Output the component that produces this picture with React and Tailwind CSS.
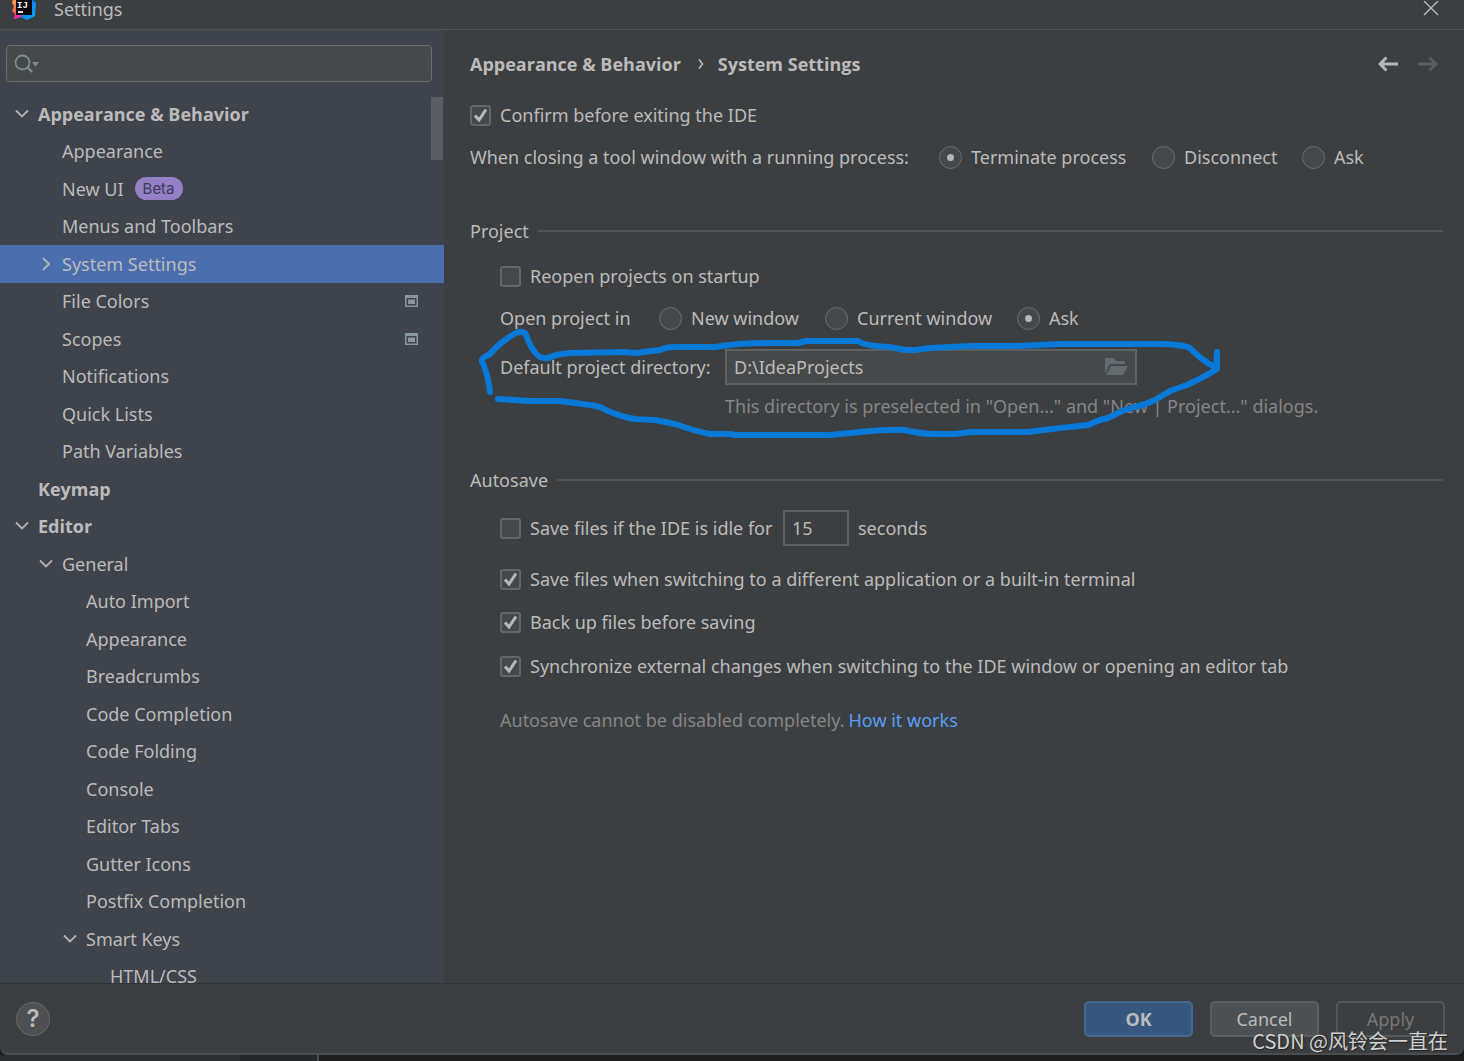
import React from "react";

const tree = [
  { label: "Appearance & Behavior", depth: 0, bold: true, arrow: "down" },
  { label: "Appearance", depth: 1 },
  { label: "New UI", depth: 1, badge: "Beta" },
  { label: "Menus and Toolbars", depth: 1 },
  { label: "System Settings", depth: 1, arrow: "right", selected: true },
  { label: "File Colors", depth: 1, project: true },
  { label: "Scopes", depth: 1, project: true },
  { label: "Notifications", depth: 1 },
  { label: "Quick Lists", depth: 1 },
  { label: "Path Variables", depth: 1 },
  { label: "Keymap", depth: 0, bold: true },
  { label: "Editor", depth: 0, bold: true, arrow: "down" },
  { label: "General", depth: 1, arrow: "down" },
  { label: "Auto Import", depth: 2 },
  { label: "Appearance", depth: 2 },
  { label: "Breadcrumbs", depth: 2 },
  { label: "Code Completion", depth: 2 },
  { label: "Code Folding", depth: 2 },
  { label: "Console", depth: 2 },
  { label: "Editor Tabs", depth: 2 },
  { label: "Gutter Icons", depth: 2 },
  { label: "Postfix Completion", depth: 2 },
  { label: "Smart Keys", depth: 2, arrow: "down" },
  { label: "HTML/CSS", depth: 3 },
];

const indents = ["pl-[15px]", "pl-[39px]", "pl-[63px]", "pl-[87px]"];

function IdeaLogo() {
  return (
    <svg width="26" height="26" viewBox="0 0 26 26" aria-hidden="true">
      <defs>
        <linearGradient id="warm" x1="0" y1="0" x2="0" y2="1">
          <stop offset="0" stopColor="#fdb060" />
          <stop offset="0.5" stopColor="#ff7a45" />
          <stop offset="1" stopColor="#fe2a7c" />
        </linearGradient>
        <linearGradient id="cool" x1="0" y1="0" x2="1" y2="1">
          <stop offset="0" stopColor="#7c59d8" />
          <stop offset="0.5" stopColor="#087cfa" />
          <stop offset="1" stopColor="#07b1f5" />
        </linearGradient>
      </defs>
      <path d="M2 5 L12 2 L14 14 L10 23 L3 25 L4 20 L1 17 L3 12 L1 9 Z" fill="url(#warm)" />
      <path d="M11 2 L21 2 L22 6 L25 9 L24 22 L16 26 L10 23 L4 25 L6 20 L12 12 Z" fill="url(#cool)" />
      <path d="M3 25 L5 19 L11 20 L10 23 Z" fill="#fe2a9c" />
      <rect x="5" y="5" width="16" height="16" fill="#0b0508" />
      <text x="6" y="14" fill="#fff" fontSize="9" fontWeight="700" fontFamily="Liberation Mono, monospace">IJ</text>
      <rect x="7" y="17" width="5" height="2" fill="#ddd" />
    </svg>
  );
}

function Chevron({ dir }) {
  return (
    <svg width="14" height="14" viewBox="0 0 14 14" fill="none" stroke="#b0b3b6" strokeWidth="1.8" aria-hidden="true">
      {dir === "down" ? <path d="M1 3.500 L7 9.500 L13 3.500" /> : <path d="M4 1 L10 7 L4 13" />}
    </svg>
  );
}

function ProjectIcon() {
  return (
    <svg className="mr-[26px] shrink-0" width="13" height="12" viewBox="0 0 13 12" aria-hidden="true">
      <path d="M0 0H13V12H0Z M1.500 3V10.500H11.500V3Z" fill="#8c969f" fillRule="evenodd" />
      <rect x="3" y="4.500" width="7" height="4.500" fill="#8c969f" />
    </svg>
  );
}

function TreeRow({ item }) {
  return (
    <li className={item.selected ? "flex bg-[#4b6eaf]" : "flex"}>
      <button
        type="button"
        className={`flex min-w-0 flex-1 items-center text-left ${indents[item.depth]} ${item.bold ? "font-['Open_Sans',sans-serif] font-bold" : ""}`}
      >
        <span className="flex w-[23px] shrink-0 items-center">{item.arrow && <Chevron dir={item.arrow} />}</span>
        <span className="whitespace-nowrap">{item.label}</span>
        {item.badge && (
          <span className="ml-[11px] flex h-[23px] items-center rounded-full bg-[#9380c6] px-2 font-['Inter',sans-serif] text-[15px] text-[#403a55]">
            {item.badge}
          </span>
        )}
        <span className="flex-1" />
        {item.project && <ProjectIcon />}
      </button>
    </li>
  );
}

function Check({ label, checked }) {
  return (
    <label className="flex items-center gap-[9px] whitespace-nowrap">
      <span className="relative flex size-[21px] shrink-0">
        <input
          type="checkbox"
          defaultChecked={checked}
          className="peer size-[21px] appearance-none rounded-[3px] border-2 border-[#636667] bg-[#43494a]"
        />
        <svg
          className="pointer-events-none absolute inset-0 hidden peer-checked:block"
          viewBox="0 0 21 21"
          fill="none"
          stroke="#b5b7b8"
          strokeWidth="3"
          aria-hidden="true"
        >
          <path d="M5 10.500 L9 15 L16 4.500" />
        </svg>
      </span>
      {label}
    </label>
  );
}

function Radio({ label, name, checked, className = "" }) {
  return (
    <label className={`flex items-center gap-[9px] whitespace-nowrap ${className}`}>
      <span className="relative flex size-[23px] shrink-0 items-center justify-center">
        <input
          type="radio"
          name={name}
          defaultChecked={checked}
          className="peer size-[23px] appearance-none rounded-full border border-[#6b6e6f] bg-[#43494a]"
        />
        <span className="pointer-events-none absolute hidden size-[7px] rounded-full bg-[#b5b7b8] peer-checked:block" />
      </span>
      {label}
    </label>
  );
}

function Section({ title, className }) {
  return (
    <div className={`flex h-9 items-center gap-[9px] ${className}`}>
      <h2>{title}</h2>
      <span className="h-[2px] flex-1 bg-[#525252]" />
    </div>
  );
}

function Marker() {
  return (
    <svg
      className="pointer-events-none absolute -top-[29px] -left-[30px]"
      width="760"
      height="130"
      viewBox="470 320 760 130"
      fill="none"
      stroke="#0679d9"
      strokeWidth="6"
      strokeLinecap="round"
      strokeLinejoin="round"
      aria-hidden="true"
    >
      <path d="M490 392 Q488 374 482 361 Q481 358 490 354 Q500 342 516 333 Q524 330 526 335 Q532 352 540 357 Q546 360 556 355 L570 353 L625 352 L635 353 L660 350 Q666 347 674 347 L715 347 Q740 343 765 343 L798 343 L806 341 L858 341 Q864 346 890 347 L905 350 L915 350 L930 348 L970 346 L1020 346 L1060 344 L1165 344 Q1184 345 1190 348 Q1200 359 1216 368 L1217 352 L1217 369 Q1206 376 1187 385 L1170 391 L1155 400 Q1145 405 1135 407 L1122 411 L1108 418 L1100 420 L1088 425 L1060 428 L1028 432 L970 432 L955 434 L930 434 Q916 433 904 430 Q892 429 860 432 L830 435 L735 435 L731 434 L710 434 Q698 432 675 424 L655 420 L635 419 Q622 417 608 411 Q600 406 590 405 L560 401 L530 401 L498 399" />
    </svg>
  );
}

export default function App() {
  return (
    <div className="flex h-screen flex-col overflow-hidden bg-[#1e1e1e] font-['Noto_Sans','Noto_Sans_CJK_SC',sans-serif] text-[18px] leading-6 text-[#bbbbbb]">
      <div className="relative flex min-h-0 flex-1 flex-col overflow-hidden rounded-b-lg border-b-2 border-[#4b4d4e] bg-[#3c3f41]">
        <header className="flex h-[30px] shrink-0 items-start border-b border-[#515355] pr-[25px] pl-[11px]">
          <div className="-mt-[6px] w-[43px] shrink-0">
            <IdeaLogo />
          </div>
          <h1 className="-mt-[3px] flex-1">Settings</h1>
          <button type="button" aria-label="Close" className="mt-px">
            <svg width="16" height="15" viewBox="0 0 16 15" stroke="#bbbbbb" strokeWidth="1.4" aria-hidden="true">
              <path d="M1 0 L15 14 M15 0 L1 14" />
            </svg>
          </button>
        </header>

        <div className="flex min-h-0 flex-1">
          <aside className="flex w-[444px] shrink-0 flex-col bg-[#3f434c]">
            <div className="mt-[15px] mr-3 ml-[6px] flex h-[37px] shrink-0 items-center rounded-[4px] border border-[#6a6c6d] bg-[#45494a] pl-[7px]">
              <svg width="26" height="20" viewBox="0 0 26 20" fill="none" stroke="#7f8b91" strokeWidth="1.8" aria-hidden="true">
                <circle cx="8.5" cy="8.5" r="7" />
                <path d="M13.500 13.500 L18 18" strokeWidth="2.4" />
                <path d="M18 8 H25 L21.500 12.500 Z" fill="#7f8b91" stroke="none" />
              </svg>
              <input type="text" aria-label="Search settings" className="min-w-0 flex-1 bg-transparent px-2 outline-none" />
            </div>
            <div className="relative mt-[13px] min-h-0 flex-1 overflow-hidden">
              <ul className="grid h-[900px] auto-rows-fr">
                {tree.map((item, i) => (
                  <TreeRow key={i} item={item} />
                ))}
              </ul>
              <div className="absolute top-[2px] right-[1px] h-[63px] w-3 bg-[#5a5d64]" />
            </div>
          </aside>

          <main className="min-w-0 flex-1 pt-4 pr-[21px] pl-[26px]">
            <nav className="flex h-9 items-center font-['Open_Sans',sans-serif] font-bold whitespace-nowrap">
              <a href="#appearance">Appearance &amp; Behavior</a>
              <svg className="mr-[14px] ml-[17px]" width="6" height="12" viewBox="0 0 6 12" fill="none" stroke="#bbbbbb" strokeWidth="1.6" aria-hidden="true">
                <path d="M1 1.500 L4.500 6 L1 10.500" />
              </svg>
              <span>System Settings</span>
              <span className="flex-1" />
              <button type="button" aria-label="Back" className="mr-5">
                <svg width="20" height="16" viewBox="0 0 20 16" fill="none" stroke="#b5b7b8" strokeWidth="3" aria-hidden="true">
                  <path d="M20 8 H2 M8.500 1.500 L2 8 L8.500 14.500" />
                </svg>
              </button>
              <button type="button" aria-label="Forward" className="mr-[5px]" disabled>
                <svg width="20" height="16" viewBox="0 0 20 16" fill="none" stroke="#5a5c5d" strokeWidth="3" aria-hidden="true">
                  <path d="M0 8 H18 M11.500 1.500 L18 8 L11.500 14.500" />
                </svg>
              </button>
            </nav>

            <div className="mt-[15px] flex h-9 items-center">
              <Check label="Confirm before exiting the IDE" checked />
            </div>
            <div role="radiogroup" aria-labelledby="closing" className="mt-[6px] flex h-9 items-center">
              <span id="closing" className="w-[469px] shrink-0 whitespace-nowrap">When closing a tool window with a running process:</span>
              <Radio name="closing" label="Terminate process" checked className="w-[213px]" />
              <Radio name="closing" label="Disconnect" className="w-[150px]" />
              <Radio name="closing" label="Ask" />
            </div>

            <Section title="Project" className="mt-[38px]" />
            <div className="pl-[30px]">
              <div className="mt-[9px] flex h-9 items-center">
                <Check label="Reopen projects on startup" />
              </div>
              <div role="radiogroup" aria-labelledby="open-in" className="mt-[6px] flex h-9 items-center">
                <span id="open-in" className="w-[159px] shrink-0 whitespace-nowrap">Open project in</span>
                <Radio name="open" label="New window" className="w-[166px]" />
                <Radio name="open" label="Current window" className="w-[192px]" />
                <Radio name="open" label="Ask" checked />
              </div>
              <div className="relative mt-[13px] grid grid-cols-[225px_1fr] gap-y-[3px]">
                <label htmlFor="dir" className="self-center whitespace-nowrap">Default project directory:</label>
                <div className="flex h-9 w-[412px] items-center border-2 border-[#5f6162] bg-[#45494a] pr-[7px]">
                  <input id="dir" type="text" defaultValue="D:\IdeaProjects" className="min-w-0 flex-1 bg-transparent pl-[7px] outline-none" />
                  <button type="button" aria-label="Browse">
                    <svg width="24" height="18" viewBox="0 0 24 18" fill="#646b70" aria-hidden="true">
                      <path d="M1 0 H9 L12 3 H21 V6 H6 L1 15 Z" />
                      <path d="M7 8 H24 L19 17 H2 Z" />
                    </svg>
                  </button>
                </div>
                <p className="col-start-2 flex h-9 items-center whitespace-nowrap text-[#848687]">
                  This directory is preselected in "Open..." and "New | Project..." dialogs.
                </p>
                <Marker />
              </div>
            </div>

            <Section title="Autosave" className="mt-[38px]" />
            <div className="pl-[30px]">
              <div className="mt-[12px] flex h-9 items-center">
                <div className="w-[283px] shrink-0">
                  <Check label="Save files if the IDE is idle for" />
                </div>
                <input
                  type="text"
                  aria-label="Idle seconds"
                  defaultValue="15"
                  className="h-9 w-[66px] border-2 border-[#5f6162] bg-transparent pl-[7px] outline-none"
                />
                <span className="ml-[9px]">seconds</span>
              </div>
              <div className="mt-[15px] flex h-9 items-center">
                <Check label="Save files when switching to a different application or a built-in terminal" checked />
              </div>
              <div className="mt-[7px] flex h-9 items-center">
                <Check label="Back up files before saving" checked />
              </div>
              <div className="mt-[8px] flex h-9 items-center">
                <Check label="Synchronize external changes when switching to the IDE window or opening an editor tab" checked />
              </div>
              <p className="mt-[18px] flex h-9 items-center gap-1 whitespace-nowrap text-[#848687]">
                Autosave cannot be disabled completely.
                <a href="#autosave" className="text-[#589df6]">How it works</a>
              </p>
            </div>
          </main>
        </div>

        <footer className="flex h-[70px] shrink-0 items-center border-t border-[#323537] pr-[19px] pl-4">
          <button type="button" aria-label="Help" className="flex size-[34px] items-center justify-center rounded-full border border-[#666969] bg-[#4c5052] font-['Inter',sans-serif] text-2xl font-semibold">
            ?
          </button>
          <span className="flex-1" />
          <div className="flex gap-[17px]">
            <button type="button" className="h-9 w-[109px] rounded-[5px] border-2 border-[#436a8c] bg-[#365880] font-bold">OK</button>
            <button type="button" className="h-9 w-[109px] rounded-[5px] border-2 border-[#5b5e5f] bg-[#4c5052]">Cancel</button>
            <button type="button" disabled className="h-9 w-[109px] rounded-[5px] border-2 border-[#55585a] text-[#777777]">Apply</button>
          </div>
        </footer>
      </div>

      <div className="flex h-[6px] shrink-0">
        <span className="w-60 bg-[#2d2e2f]" />
        <span className="w-[77px] bg-[#252627]" />
        <span className="w-[2px] bg-[#4b4d4e]" />
      </div>

      <div className="pointer-events-none absolute right-4 bottom-2 font-['Noto_Sans_CJK_SC',sans-serif] text-[20px] whitespace-nowrap text-[#d0d0d0] [text-shadow:1px_1px_1px_#222]">
        CSDN @风铃会一直在
      </div>
    </div>
  );
}
